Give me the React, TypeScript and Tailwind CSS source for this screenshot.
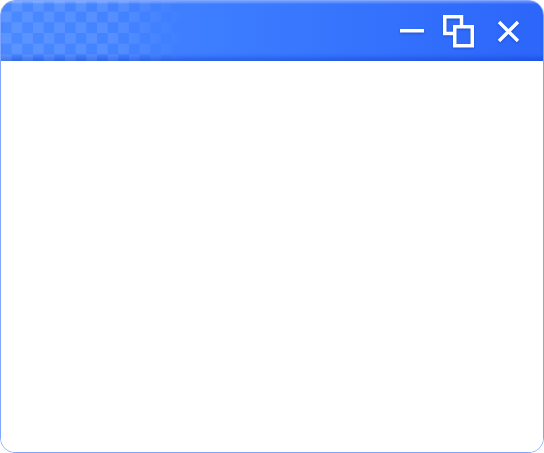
import React from "react";

export default function App() {
  return (
    <div className="w-[544px] h-[453px] bg-white">
      <div className="w-[544px] h-[453px] rounded-[15px] border border-[#80a7ff] overflow-hidden bg-white flex flex-col">
        <div className="relative h-[60px] shrink-0 bg-[linear-gradient(to_right,#4a89ff,#3b7bff_45%,#2c66fa)] shadow-[inset_0_-6px_4px_-2px_rgba(10,50,190,0.35),inset_0_3px_2px_-1px_rgba(255,255,255,0.25)] flex items-center justify-end pr-[23px]">
          <div className="absolute inset-0 bg-[repeating-conic-gradient(rgba(255,255,255,0.1)_0_25%,transparent_0_50%)] bg-[length:21.33px_21.33px] [mask-image:linear-gradient(to_right,black_0%,black_20%,transparent_34%)]" />
          <svg width="24" height="4" viewBox="0 0 24 4" className="relative drop-shadow-[0_1px_1px_rgba(0,20,120,0.35)]">
            <rect x="0" y="0" width="24" height="3.5" fill="#ffffff" />
          </svg>
          <svg width="31" height="33" viewBox="0 0 31 33" className="relative ml-[19px] drop-shadow-[0_1px_1px_rgba(0,20,120,0.35)]">
            <path d="M10 18.5 H1.75 V1.75 H18.5 V10" fill="none" stroke="#ffffff" strokeWidth="3.5" strokeLinecap="square" />
            <rect x="11.75" y="11.75" width="17.5" height="19" fill="none" stroke="#ffffff" strokeWidth="3.5" />
          </svg>
          <svg width="23" height="23" viewBox="0 0 23 23" className="relative ml-[23px] mt-[1px] drop-shadow-[0_1px_1px_rgba(0,20,120,0.35)]">
            <path d="M2 2 L21 21 M21 2 L2 21" fill="none" stroke="#ffffff" strokeWidth="3.4" />
          </svg>
        </div>
        <div className="flex-1 bg-white" />
      </div>
    </div>
  );
}
